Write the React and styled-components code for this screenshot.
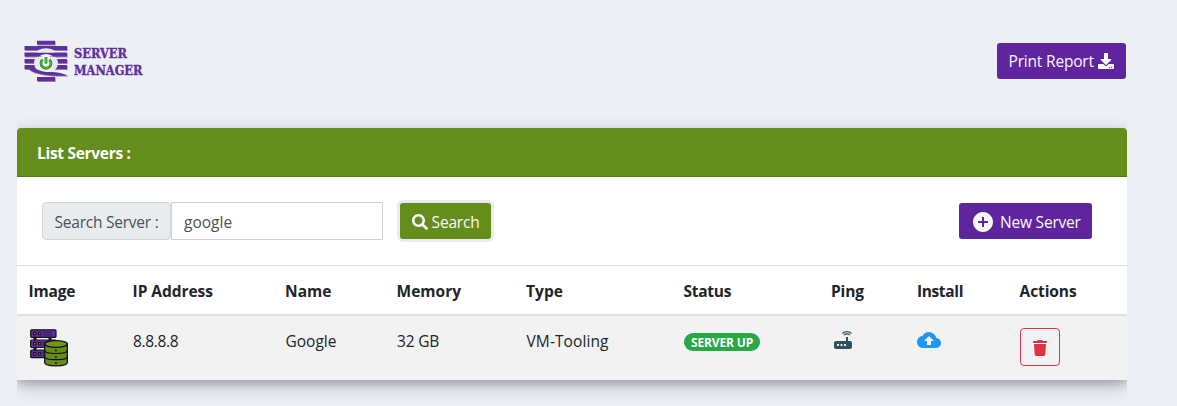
import React from "react";
import styled, { createGlobalStyle, css } from "styled-components";
import { FaSearch, FaDownload, FaTrash } from "react-icons/fa";
import { MdAddCircle, MdRouter, MdBackup } from "react-icons/md";

const GlobalStyle = createGlobalStyle`
  *, *::before, *::after { box-sizing: border-box; }
  body {
    margin: 0;
    height: 406px;
    overflow: hidden;
    background: #eceff4;
    color: #212529;
    font-family: "Open Sans", "Noto Sans", sans-serif;
    font-size: 15.5px;
    line-height: 24px;
  }
`;

const Page = styled.main`
  width: 1110px;
  height: 406px;
  margin-left: 17px;
  overflow: hidden;
`;

const TopBar = styled.header`
  display: flex;
  justify-content: space-between;
  align-items: flex-start;
  height: 128px;
  padding: 36px 1px 0 5px;
`;

const Caption = styled.span`
  white-space: nowrap;
  letter-spacing: ${(p) => p.$ls || 0}px;
`;

const Button = styled.button`
  display: flex;
  align-items: center;
  gap: ${(p) => p.$gap || 4}px;
  height: 36px;
  width: ${(p) => p.$w}px;
  margin: 0;
  padding: ${(p) => p.$top || 0}px 0 0 ${(p) => p.$left || 12}px;
  border: 0;
  border-radius: 3px;
  background: ${(p) => (p.$green ? "#658d1b" : "#5f259f")};
  color: #f8f9fa;
  font: inherit;
  ${(p) => p.$focused && css`box-shadow: 0 0 0 3px #e9eaec;`}

  svg {
    flex: none;
  }
`;

const PrintButton = styled(Button)`
  margin-top: 7px;
`;

const Card = styled.section`
  background: #fff;
  border-radius: 4px 4px 0 0;
  box-shadow: 0 4px 8px rgba(0, 0, 0, 0.2), 0 6px 20px rgba(0, 0, 0, 0.19);
`;

const CardHeader = styled.h1`
  margin: 0;
  height: 49px;
  padding: 13px 20px 0;
  border-bottom: 1px solid #587b18;
  border-radius: 4px 4px 0 0;
  background: #658d1b;
  color: #fff;
  font-size: 15.5px;
  line-height: 24px;
  font-weight: 700;
`;

const Toolbar = styled.div`
  display: flex;
  align-items: center;
  height: 88px;
  padding: 0 35px 0 25px;
`;

const Label = styled.label`
  width: 129px;
  height: 38px;
  padding: 7px 0 0 11.5px;
  border: 1px solid #ced4da;
  border-radius: 4px;
  background: #e9ecef;
  color: #495057;
`;

const Input = styled.input`
  width: 212px;
  height: 38px;
  margin-right: 17px;
  padding: 2px 12px 0;
  border: 1px solid #ced4da;
  border-radius: 0;
  color: #495057;
  font: inherit;
  outline: 0;
`;

const Spacer = styled.div`
  flex: 1;
`;

const Table = styled.table`
  width: 100%;
  table-layout: fixed;
  border-collapse: separate;
  border-spacing: 0;
`;

const Th = styled.th`
  height: 51px;
  padding: 13px 0 0 11.6px;
  vertical-align: top;
  text-align: left;
  border-top: 1px solid #dee2e6;
  border-bottom: 2px solid #dee2e6;
  font-weight: 700;
`;

const Td = styled.td`
  height: 64px;
  padding: ${(p) => p.$top || 13}px 0 0 12px;
  vertical-align: top;
  background: #f2f2f2;
  line-height: ${(p) => (p.$top ? 0 : 24)}px;
`;

const Badge = styled.span`
  display: block;
  width: 76px;
  height: 18px;
  border-radius: 9px;
  background: #28a745;
  color: #fff;
  font-size: 12px;
  font-weight: 700;
  line-height: 19px;
  text-align: center;
  white-space: nowrap;
  letter-spacing: -0.15px;
`;

const DeleteButton = styled.button`
  display: flex;
  align-items: center;
  justify-content: center;
  width: 40px;
  height: 38px;
  padding: 1px 0 0;
  border: 1px solid #dc3545;
  border-radius: 4px;
  background: transparent;
  color: #dc3545;
`;

const bars = "M37 40.700h18v3.800H37zM24.500 46H67v4H24.500zM24.500 52.500h42.500v4H24.500zM24.500 59h42.500v4H24.500zM24.500 65h42.500v4H24.500zM37 77h18v4H37z";
const swoosh = "M28 68.400h7q6 3.600 16 3.600q10 .3 17 3.600q-15 .2-24-1.200q-11-1.600-16-6z";

const LogoSvg = styled.svg`
  overflow: visible;
`;

function Logo() {
  return (
    <LogoSvg width="154" height="50" viewBox="22 36 154 50" role="img" aria-label="Server Manager">
      <g fill="#262033" opacity="0.5" transform="translate(0.6 1)">
        <path d={bars} />
        <path d={swoosh} />
      </g>
      <path d={bars} fill="#5f2f9e" />
      <path d="M37.500 50.500q8.500-4.500 17 0v2h-17z" fill="#e6eaf0" />
      <path d="M36.500 57h19q2.500 2.500 2.500 6t-3 7q-9 3.500-18 0q-3-3.500-3-7t2.500-6z" fill="#e6eaf0" />
      <path d="M38.500 56.600q7.500-5 15 0z" fill="#f2f4f7" />
      <path d={swoosh} fill="#5f2f9e" />
      <circle cx="46" cy="63.200" r="7.800" fill="#f7f8fa" />
      <path d="M42.600 59.600a5 5 0 1 0 6.800 0M46 57v6.500" fill="none" stroke="#2f7a2a" strokeWidth="2.800" />
      <path d="M42.600 59.600a5 5 0 1 0 6.800 0M46 57v6.500" fill="none" stroke="#48c236" strokeWidth="1.500" />
      <g fill="#5f2f9e" stroke="#5f2f9e" strokeWidth="0.400" fontFamily="DejaVu Serif, serif" fontWeight="700" fontSize="13.500">
        <text x="74" y="58" textLength="53" lengthAdjust="spacingAndGlyphs">SERVER</text>
        <text x="74" y="75.300" textLength="68.500" lengthAdjust="spacingAndGlyphs">MANAGER</text>
      </g>
    </LogoSvg>
  );
}

function ServerImage() {
  return (
    <svg width="40" height="40" viewBox="29 328 40 40">
      {[329.8, 340, 350.2].map((y) => (
        <g key={y}>
          <rect x="30.700" y={y} width="25.300" height="7.500" rx="1" fill="#5f2f9e" stroke="#141018" strokeWidth="1.200" />
          <rect x="33" y={y + 2} width="3.400" height="3.400" fill="#111" />
          <rect x="38" y={y + 2} width="3.400" height="3.400" fill="#111" />
          <rect x="34" y={y + 3} width="1.400" height="1.400" fill="#f05050" />
          <rect x="39" y={y + 3} width="1.400" height="1.400" fill="#28b45a" />
          <path d={`M43 ${y + 2.6}h9M43 ${y + 5}h9`} stroke="#141018" strokeWidth="0.700" />
          {y < 350 && <path d={`M35 ${y + 7.5}v2.700M50 ${y + 7.5}v2.700`} stroke="#141018" strokeWidth="3" />}
        </g>
      ))}
      <path d="M44.700 344v18.500c0 4.600 22.600 4.600 22.600 0V344z" fill="#658d1b" stroke="#141018" strokeWidth="1.300" />
      <ellipse cx="56" cy="344" rx="11.300" ry="3.300" fill="#6f9720" stroke="#141018" strokeWidth="1.300" />
      <path d="M44.700 350.500c0 4 22.600 4 22.600 0M44.700 356.700c0 4 22.600 4 22.600 0" fill="none" stroke="#141018" strokeWidth="1.200" />
      <path d="M55 350.500h1.800M55 357h1.800M55 363h1.800" stroke="#141018" strokeWidth="1.500" />
    </svg>
  );
}

const columns = [
  ["Image", 104, -0.2],
  ["IP Address", 152.5, -0.05],
  ["Name", 111.5, 0],
  ["Memory", 129.5, 0],
  ["Type", 157.5, 0],
  ["Status", 147.3, -0.3],
  ["Ping", 86, -0.1],
  ["Install", 102.7, -0.35],
  ["Actions", 119, -0.1],
];

export default function App() {
  return (
    <>
      <GlobalStyle />
      <Page>
        <TopBar>
          <Logo />
          <PrintButton $w={129} $left={11.6}>
            <Caption $ls={-0.2}>Print Report</Caption>
            <FaDownload size={16} />
          </PrintButton>
        </TopBar>
        <Card>
          <CardHeader><Caption $ls={-0.3}>List Servers :</Caption></CardHeader>
          <Toolbar>
            <Label htmlFor="server-search"><Caption $ls={-0.23}>Search Server :</Caption></Label>
            <Input id="server-search" defaultValue="google" />
            <Button $green $focused $w={91} $left={11.6} $top={1}>
              <FaSearch size={16} />
              <Caption $ls={-0.2}>Search</Caption>
            </Button>
            <Spacer />
            <Button $w={133} $gap={5} $top={1}>
              <MdAddCircle size={24} />
              <Caption $ls={-0.2}>New Server</Caption>
            </Button>
          </Toolbar>
          <Table>
            <colgroup>
              {columns.map(([name, w]) => <col key={name} style={{ width: w }} />)}
            </colgroup>
            <thead>
              <tr>
                {columns.map(([name, , ls]) => (
                  <Th key={name}><Caption $ls={ls}>{name}</Caption></Th>
                ))}
              </tr>
            </thead>
            <tbody>
              <tr>
                <Td $top={12}><ServerImage /></Td>
                <Td><Caption $ls={-0.35}>8.8.8.8</Caption></Td>
                <Td>Google</Td>
                <Td><Caption $ls={-0.2}>32 GB</Caption></Td>
                <Td><Caption $ls={0.1}>VM-Tooling</Caption></Td>
                <Td $top={17}><Badge>SERVER UP</Badge></Td>
                <Td $top={12}><MdRouter size={24} color="#2f4f5f" /></Td>
                <Td $top={12}><MdBackup size={24} color="#2196f3" /></Td>
                <Td $top={12}><DeleteButton aria-label="Delete"><FaTrash size={16} /></DeleteButton></Td>
              </tr>
            </tbody>
          </Table>
        </Card>
      </Page>
    </>
  );
}
